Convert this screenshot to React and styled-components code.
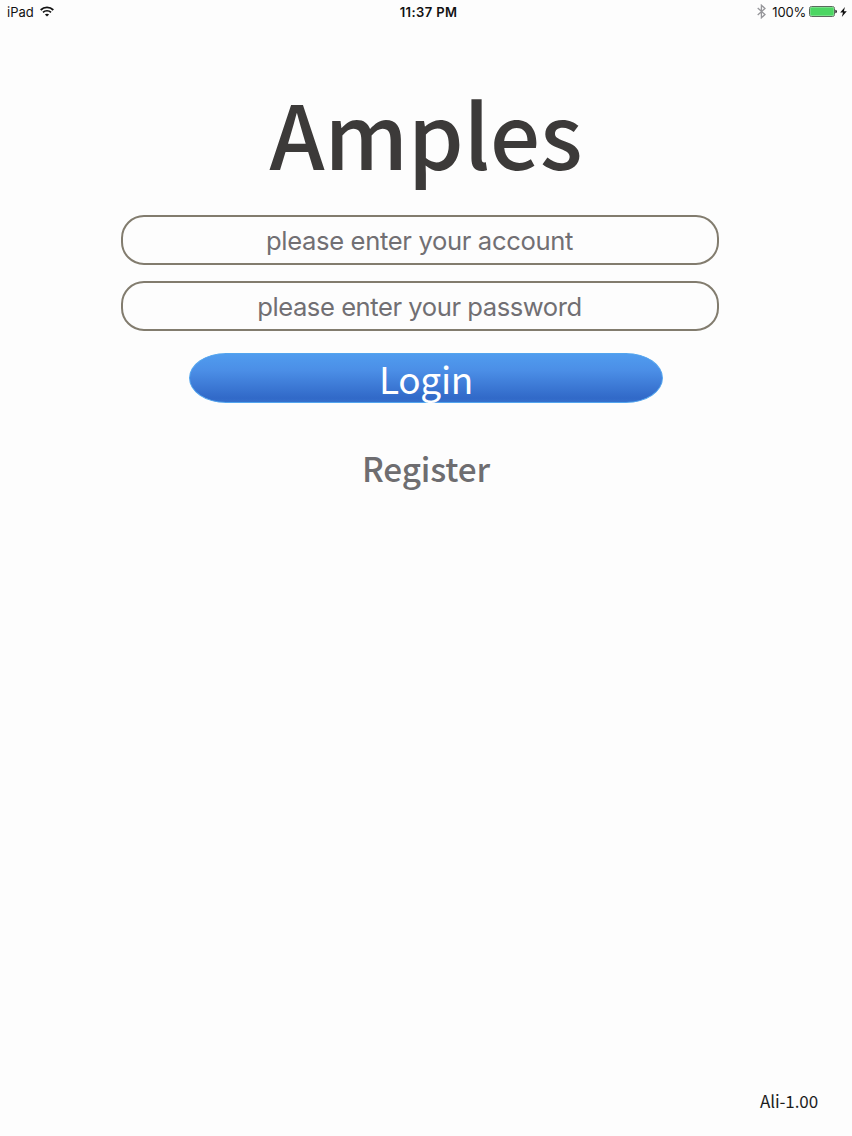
import React from "react";
import styled, { createGlobalStyle } from "styled-components";

const GlobalStyle = createGlobalStyle`
  * {
    box-sizing: border-box;
  }
  body {
    margin: 0;
    background-color: #fdfdfd;
  }
`;
const Container = styled.div`
  display: flex;
  flex-direction: column;
  height: 1136px;
  width: 852px;
  overflow: hidden;
  font-family: "Noto Sans CJK SC", "Noto Sans", sans-serif;
`;
const StatusBar = styled.div`
  display: flex;
  align-items: center;
  height: 24px;
  padding: 0 5px 0 7px;
  font-family: Inter, "Liberation Sans", sans-serif;
  font-size: 13px;
  line-height: 24px;
  color: #111;
`;
const StatusGroup = styled.div`
  display: flex;
  flex: 1 1 0;
  align-items: center;
  padding-bottom: 1px;
  justify-content: ${(props) => (props.$end ? "flex-end" : "flex-start")};
`;
const Device = styled.span`
  margin-right: 6px;
`;
const Time = styled.span`
  font-weight: 600;
  letter-spacing: 0.4px;
  padding: 0 0 1px 3px;
`;
const Percent = styled.span`
  margin: 0 3px 0 6px;
  letter-spacing: -0.2px;
`;
const Form = styled.form`
  display: flex;
  flex-direction: column;
  align-items: center;
  flex: 1;
`;
const Title = styled.h1`
  margin: 57px 0 0;
  height: 100px;
  line-height: 100px;
  font-size: 88.5px;
  font-weight: 500;
  color: #3c3a39;
`;
const Input = styled.input`
  width: 598px;
  height: 50px;
  margin: ${(props) => props.$top} 12px 0 0;
  padding: 0 1px 0 0;
  border: 2px solid #827c6e;
  border-radius: 23px;
  background-color: transparent;
  outline: none;
  text-align: center;
  font-family: Inter, "Liberation Sans", sans-serif;
  font-size: 25.6px;
  letter-spacing: ${(props) => props.$spacing};
  color: #716f73;
  &::placeholder {
    color: #716f73;
    opacity: 1;
  }
`;
const Button = styled.button`
  width: 474px;
  height: 50px;
  margin: 22px 0 0;
  padding: 0;
  border: 1px solid #53a5ee;
  border-radius: 37px / 25px;
  background: linear-gradient(#509cef, #4b8ee6 35%, #3169c8 92%, #3570cc);
  font-family: inherit;
  font-size: 37px;
  line-height: 48px;
  letter-spacing: -0.3px;
  color: white;
  cursor: pointer;
`;
const Register = styled.a`
  margin-top: 45px;
  height: 40px;
  line-height: 40px;
  font-size: 33.3px;
  font-weight: 500;
  letter-spacing: -0.15px;
  color: #6e6d70;
  cursor: pointer;
`;
const Version = styled.footer`
  height: 50px;
  padding-right: 34px;
  line-height: 30px;
  font-size: 17px;
  letter-spacing: -0.1px;
  text-align: right;
  color: #1c1c1c;
`;

const WifiIcon = () => (
  <svg width="14" height="11" viewBox="0 0 14 11" fill="none" stroke="#111">
    <path d="M0.7 4 C4.2 0.5 9.8 0.5 13.3 4" strokeWidth="1.8" />
    <path d="M3 6.4 C5.2 4.2 8.8 4.2 11 6.4" strokeWidth="1.7" />
    <path d="M7 10.6 L4.9 8.5 C6 7.4 8 7.4 9.1 8.5 Z" fill="#111" stroke="none" />
  </svg>
);

const BluetoothIcon = () => (
  <svg width="9" height="15" viewBox="0 0 9 15" fill="none" stroke="#96969a" strokeWidth="1.3">
    <path d="M0.7 4 L8 10.5 L4.4 13.8 V1.2 L8 4.5 L0.7 11" />
  </svg>
);

const BatteryIcon = () => (
  <svg width="28" height="11" viewBox="0 0 28 11">
    <rect x="0.5" y="0.5" width="25" height="10" rx="2" fill="white" stroke="#5a6b5c" />
    <rect x="1.2" y="1.2" width="23.6" height="8.6" rx="1.2" fill="#4cd663" />
    <path d="M26.3 3.7 Q28 4 28 5.5 Q28 7 26.3 7.3 Z" fill="#222" />
  </svg>
);

const Bolt = styled.svg`
  margin-left: 3px;
`;
const BoltIcon = () => (
  <Bolt width="7" height="10" viewBox="0 0 7 10">
    <path d="M4.9 0 L0.2 5.6 H3 L1.8 10 L6.8 4.2 H3.9 Z" fill="#111" />
  </Bolt>
);

const App = () => {
  return (
    <Container>
      <GlobalStyle />
      <StatusBar>
        <StatusGroup>
          <Device>iPad</Device>
          <WifiIcon />
        </StatusGroup>
        <Time>11:37 PM</Time>
        <StatusGroup $end>
          <BluetoothIcon />
          <Percent>100%</Percent>
          <BatteryIcon />
          <BoltIcon />
        </StatusGroup>
      </StatusBar>
      <Form>
        <Title>Amples</Title>
        <Input $top="34px" $spacing="-0.35px" type="text" placeholder="please enter your account" />
        <Input $top="16px" $spacing="-0.45px" type="password" placeholder="please enter your password" />
        <Button type="button">Login</Button>
        <Register>Register</Register>
      </Form>
      <Version>Ali-1.00</Version>
    </Container>
  );
};

export default App;
